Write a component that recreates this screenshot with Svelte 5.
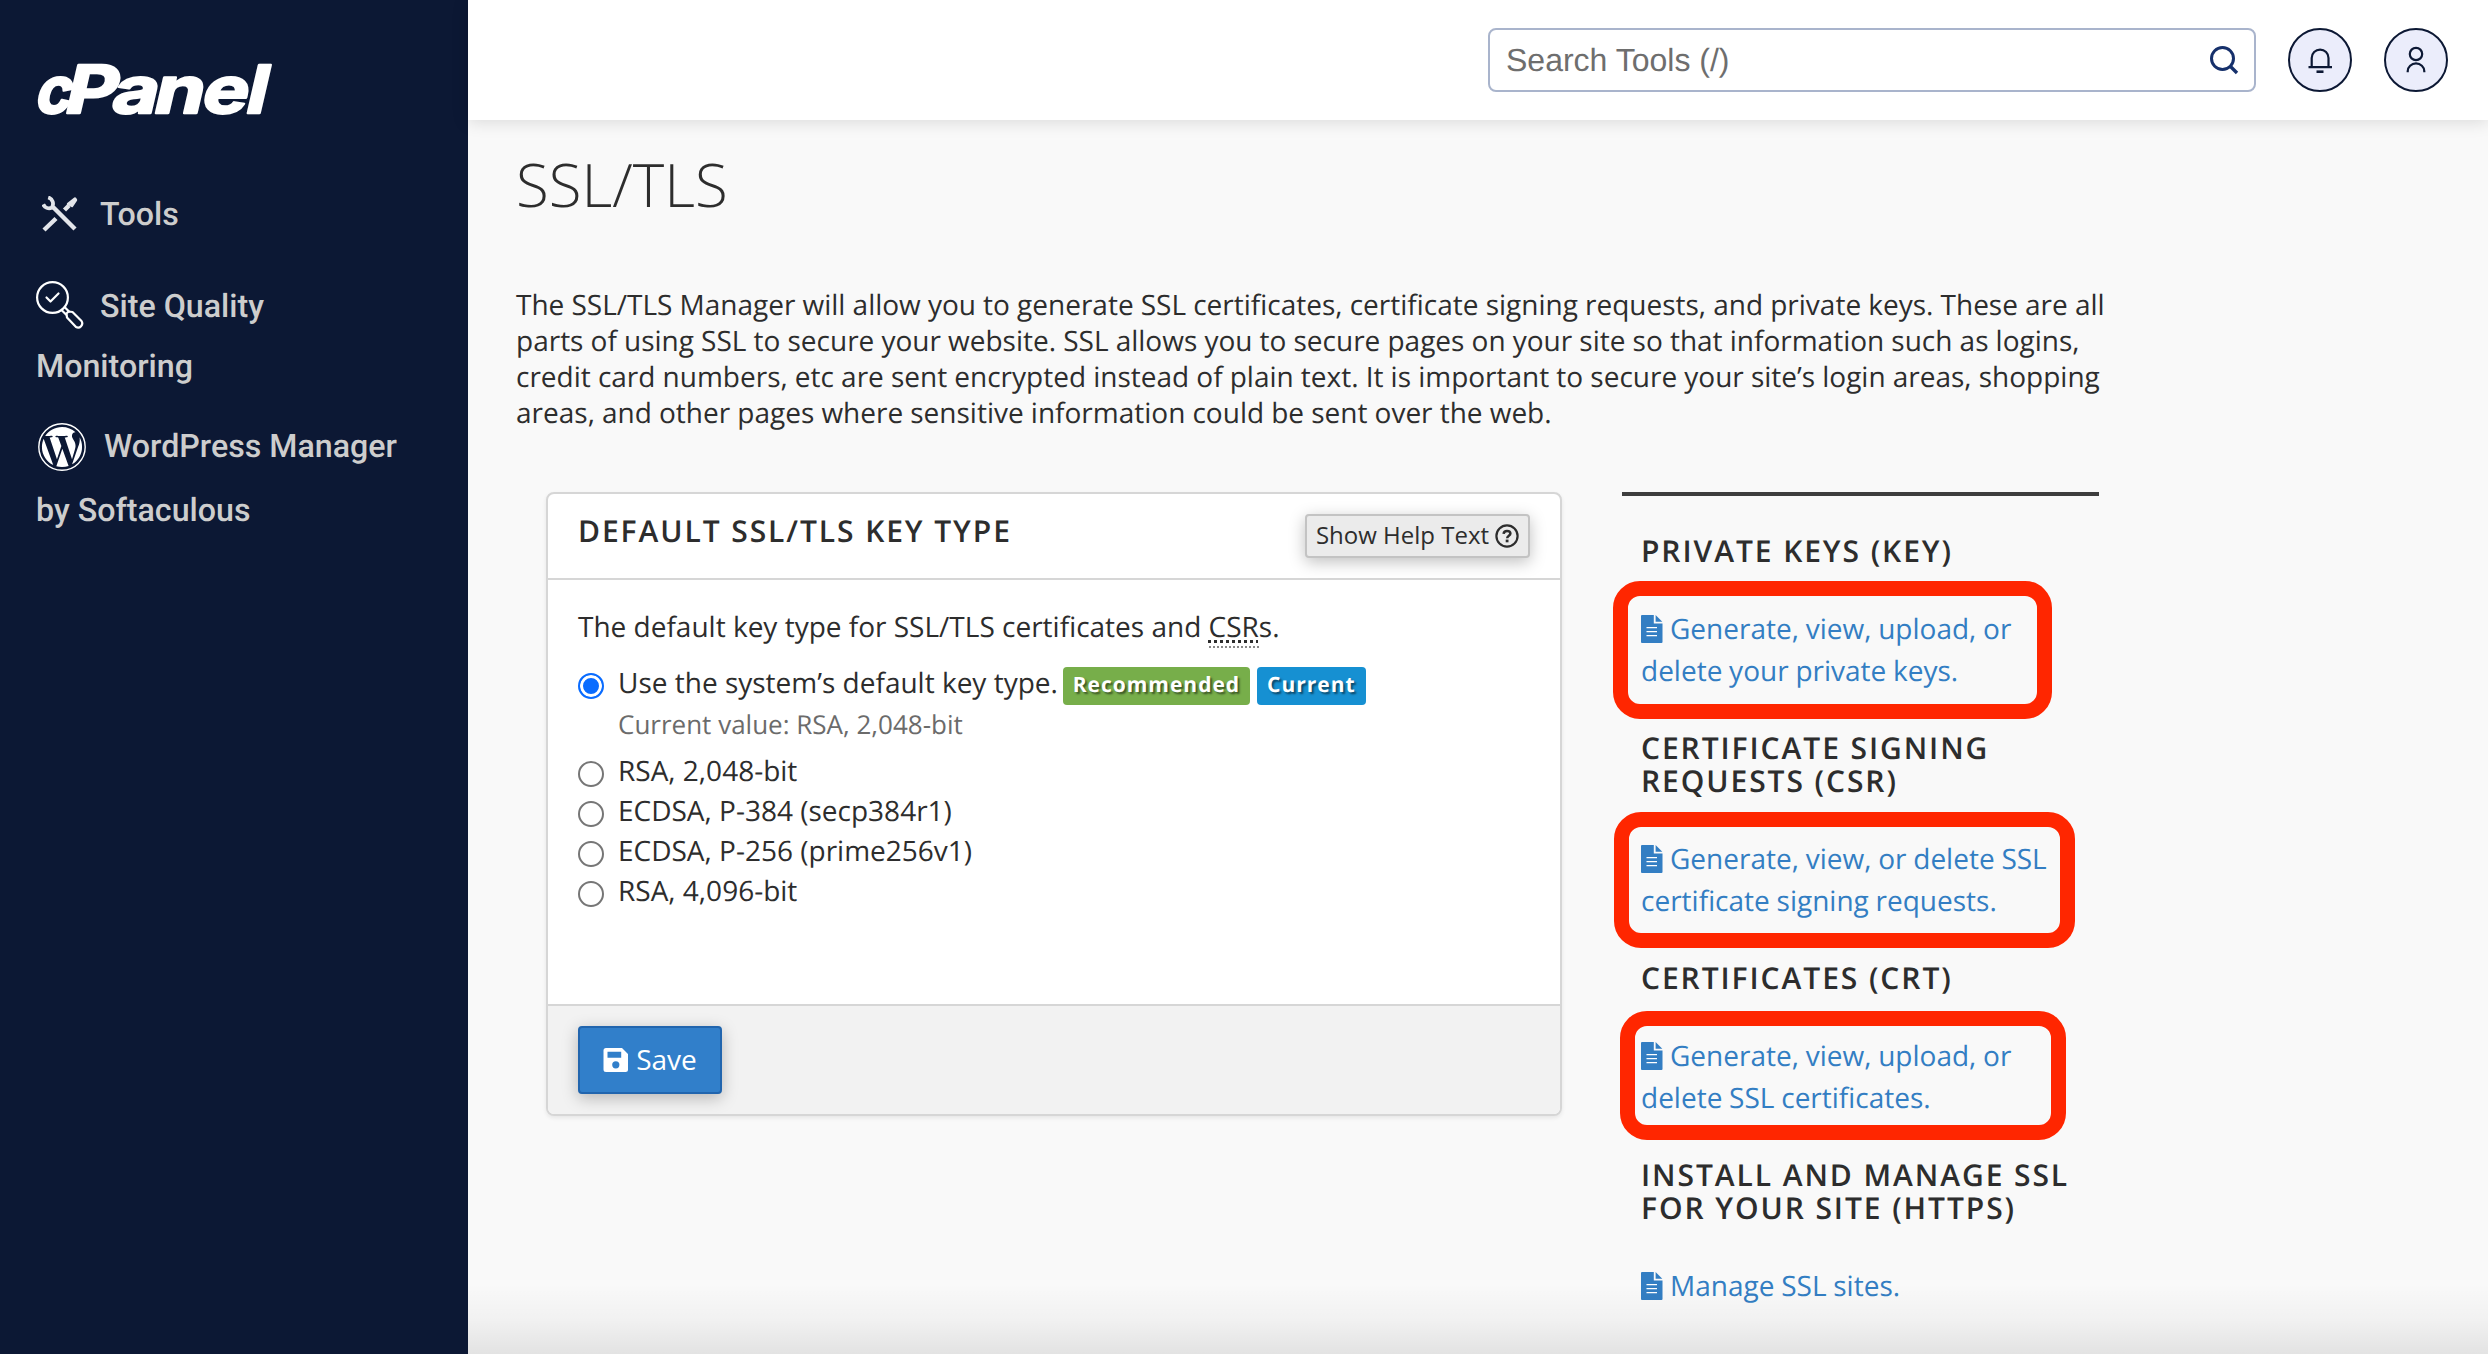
<script>
  const options = ['RSA, 2,048-bit', 'ECDSA, P-384 (secp384r1)', 'ECDSA, P-256 (prime256v1)', 'RSA, 4,096-bit'];
  const sections = [
    { title: ['PRIVATE KEYS (KEY)'], link: ['Generate, view, upload, or', 'delete your private keys.'], mark: 'mark-key' },
    { title: ['CERTIFICATE SIGNING', 'REQUESTS (CSR)'], link: ['Generate, view, or delete SSL', 'certificate signing requests.'], mark: 'mark-csr' },
    { title: ['CERTIFICATES (CRT)'], link: ['Generate, view, upload, or', 'delete SSL certificates.'], mark: 'mark-crt' },
    { title: ['INSTALL AND MANAGE SSL', 'FOR YOUR SITE (HTTPS)'], link: ['Manage SSL sites.'], mark: '' }
  ];
</script>

<div class="app">
  <aside class="sidebar">
    <svg class="logo" viewBox="0 0 240 54" role="img" aria-label="cPanel">
      <g transform="skewX(-13)" fill="#fff" stroke="#fff" stroke-width="2.4" stroke-linejoin="round" font-family="Inter, sans-serif" font-weight="700">
        <text x="9" y="51" font-size="65" textLength="36" lengthAdjust="spacingAndGlyphs">c</text>
        <text x="38" y="51" font-size="66" textLength="52" lengthAdjust="spacingAndGlyphs">P</text>
        <text x="85" y="51" font-size="65" textLength="46" lengthAdjust="spacingAndGlyphs">a</text>
        <text x="127" y="51" font-size="65" textLength="50" lengthAdjust="spacingAndGlyphs">n</text>
        <text x="175" y="51" font-size="65" textLength="46" lengthAdjust="spacingAndGlyphs">e</text>
        <text x="219" y="51" font-size="66" textLength="21" lengthAdjust="spacingAndGlyphs">l</text>
      </g>
    </svg>
    <nav>
      <a class="item tools" href="#tools">
        <svg class="ico-tools" viewBox="0 0 36 36" fill="none" stroke="#e3e5ea" stroke-width="4.4">
          <path d="M11 11 33 33" />
          <path d="M6.2 1.4a6.6 6.6 0 0 1 3.4 10.4A6.6 6.6 0 0 1 1.2 8.4" stroke-width="3.8" />
          <path d="M2 34 14 22.500M22.500 14 27 9.500" />
          <path d="M26 8 33 2.500 34 4 30 10Z" fill="#e3e5ea" stroke-width="2.4" stroke-linejoin="round" />
        </svg><span>Tools</span>
      </a>
      <a class="item quality" href="#quality">
        <span class="row"><svg class="ico-quality" viewBox="0 0 48 48" fill="none" stroke="#fff" stroke-width="2.200" stroke-linejoin="round" stroke-linecap="round">
          <circle cx="16.500" cy="16.500" r="15.400" />
          <path d="M10.500 16.500 14.500 20.500 22.500 12.500" />
          <path d="M26 29.500 30 33.500M29 26.500 33 30.500" />
          <path d="M31 36.500 30.500 32.500 32.500 30.500 36.500 31 45.500 40A4.200 4.200 0 0 1 40 46Z" />
        </svg><span>Site Quality</span></span>
        <span>Monitoring</span>
      </a>
      <a class="item wp" href="#wordpress">
        <span class="row"><svg class="ico-wp" viewBox="0 0 24 24">
          <circle cx="12" cy="12" r="11.600" fill="none" stroke="#fff" stroke-width=".7" />
          <path transform="translate(.84 .84) scale(.93)" fill="#fff" d="M21.469 6.825c.84 1.537 1.318 3.300 1.318 5.175 0 3.979-2.156 7.456-5.363 9.325l3.295-9.527c.615-1.540.820-2.771.820-3.864 0-.405-.026-.780-.070-1.110m-7.981.105c.647-.030 1.232-.105 1.232-.105.582-.075.514-.930-.067-.899 0 0-1.755.135-2.880.135-1.064 0-2.850-.150-2.850-.150-.585-.030-.661.855-.075.885 0 0 .540.061 1.125.090l1.680 4.605-2.370 7.080L5.354 6.900c.649-.030 1.234-.100 1.234-.100.585-.075.516-.930-.065-.896 0 0-1.746.138-2.874.138-.200 0-.438-.008-.690-.015C4.911 3.150 8.235 1.215 12 1.215c2.809 0 5.365 1.072 7.286 2.833-.046-.003-.091-.009-.141-.009-1.060 0-1.812.923-1.812 1.914 0 .890.513 1.643 1.060 2.531.411.720.890 1.643.890 2.977 0 .915-.354 1.994-.821 3.479l-1.075 3.585-3.900-11.610.001.014zM12 22.784c-1.059 0-2.081-.153-3.048-.437l3.237-9.406 3.315 9.087c.024.053.050.101.078.149-1.120.393-2.325.609-3.582.609M1.211 12c0-1.564.336-3.050.935-4.390L7.290 21.709C3.694 19.960 1.212 16.271 1.211 12" />
        </svg><span>WordPress Manager</span></span>
        <span>by Softaculous</span>
      </a>
    </nav>
  </aside>

  <div class="page">
    <header>
      <div class="search">
        <span>Search Tools (/)</span>
        <svg viewBox="0 0 30 30" fill="none" stroke="#16306b" stroke-width="3"><circle cx="13.500" cy="13.500" r="11" /><path d="M21 21 28 28" stroke-width="3.400" /></svg>
      </div>
      <button class="round" aria-label="Notifications">
        <svg viewBox="0 0 64 64" fill="none" stroke="#0c1834" stroke-width="2.200"><path d="M23.700 39V30a8.400 8.400 0 0 1 16.800 0V39M20.500 39.200H44" /><path d="M28.500 43.700h7" stroke-width="2.600" /></svg>
      </button>
      <button class="round" aria-label="Account">
        <svg viewBox="0 0 64 64" fill="none" stroke="#0c1834" stroke-width="2.200"><circle cx="32" cy="26" r="6.200" /><path d="M23.700 44.200v-1a8.300 7.800 0 0 1 16.600 0v1" /></svg>
      </button>
    </header>

    <main>
      <h1>SSL/TLS</h1>
      <p class="intro">The SSL/TLS Manager will allow you to generate SSL certificates, certificate signing requests, and private keys. These are all<br />parts of using SSL to secure your website. SSL allows you to secure pages on your site so that information such as logins,<br />credit card numbers, etc are sent encrypted instead of plain text. It is important to secure your site’s login areas, shopping<br />areas, and other pages where sensitive information could be sent over the web.</p>

      <div class="columns">
        <section class="card">
          <div class="card-head">
            <h2>DEFAULT SSL/TLS KEY TYPE</h2>
            <button class="help"><span>Show Help Text</span>
              <svg viewBox="0 0 24 24" fill="none" stroke="#2d2d2d"><circle cx="12" cy="12" r="10.600" stroke-width="2.200" /><path d="M8.600 9.800C8.800 7.700 10.300 6.900 12 6.900c2 0 3.400 1.100 3.400 2.700 0 2.200-3.200 2.200-3.200 4.600" stroke-width="2.500" /><path d="M12.100 15.600v2.700" stroke-width="2.800" /></svg>
            </button>
          </div>
          <div class="card-body">
            <p class="lead">The default key type for SSL/TLS certificates and <span class="abbr">CSR</span>s.</p>
            <label class="option main-option">
              <span class="radio on"></span><span class="label">Use the system’s default key type.</span>
              <span class="badge green">Recommended</span><span class="badge blue">Current</span>
            </label>
            <div class="current">Current value: RSA, 2,048-bit</div>
            {#each options as option}
              <label class="option"><span class="radio"></span><span class="label">{option}</span></label>
            {/each}
          </div>
          <div class="card-foot">
            <button class="save">
              <svg viewBox="0 0 26 26"><path fill="#fff" fill-rule="evenodd" d="M3 1H19L25 7V22.500A2.500 2.500 0 0 1 22.500 25H3A2.500 2.500 0 0 1 .5 22.500V3.500A2.500 2.500 0 0 1 3 1ZM4.500 4.800V10.800H18.200V4.800ZM12.800 14.200A3.600 3.600 0 1 0 12.800 21.400 3.600 3.600 0 1 0 12.800 14.200Z" /></svg>
              <span>Save</span>
            </button>
          </div>
        </section>

        <aside class="links">
          {#each sections as section}
            <section class="link-group">
              <h3>{#each section.title as line}<span>{line}</span>{/each}</h3>
              <a href="#ssl">
                <span class="first"><svg viewBox="0 0 22 28"><path fill="#337ec3" d="M1 0H12.800V8.600H21.500V27a1 1 0 0 1-1 1H1a1 1 0 0 1-1-1V1a1 1 0 0 1 1-1Z" /><path fill="#337ec3" d="M14.600 0 21.300 6.800H14.600Z" /><path stroke="#fff" stroke-width="1.300" d="M5.500 12.700H16M5.500 16.700H16M5.500 20.700H16" /></svg>{section.link[0]}</span>
                {#if section.link[1]}<span>{section.link[1]}</span>{/if}
                {#if section.mark}<i class="mark {section.mark}"></i>{/if}
              </a>
            </section>
          {/each}
        </aside>
      </div>
    </main>
    <div class="shade"></div>
  </div>
</div>

<style>
  :global(body) { margin: 0; overflow: hidden; }
  * { box-sizing: border-box; }
  .app { display: flex; width: 2488px; height: 1354px; overflow: hidden; font-family: "Open Sans", sans-serif; color: #2d2d2d; background: #f9f9f9; text-rendering: geometricPrecision; }
  a { text-decoration: none; }
  button { font: inherit; color: inherit; margin: 0; padding: 0; }
  svg { display: block; flex: none; }

  .sidebar { width: 468px; flex: none; background: #0c1834; padding: 62px 0 0 36px; }
  .logo { width: 240px; height: 54px; overflow: visible; }
  .item { display: flex; flex-direction: column; font-family: Roboto, sans-serif; font-size: 32.2px; font-weight: 500; color: #cdcdcd; white-space: nowrap; }
  .row { display: flex; align-items: center; }
  .tools { flex-direction: row; align-items: center; height: 60px; margin-top: 68px; padding-left: 6px; gap: 22px; }
  .ico-tools { width: 36px; height: 36px; }
  .quality { line-height: 60px; margin-top: 32px; }
  .quality .row { height: 60px; gap: 16px; }
  .ico-quality { width: 48px; height: 48px; margin-top: -2px; }
  .wp { line-height: 64px; margin-top: 18px; }
  .wp .row { height: 64px; gap: 18px; }
  .ico-wp { width: 48px; height: 48px; margin: 2px 0 0 2px; }

  .page { flex: 1; display: flex; flex-direction: column; position: relative; min-width: 0; }
  header { height: 120px; flex: none; background: #fff; display: flex; align-items: center; justify-content: flex-end; padding-right: 40px; gap: 32px; box-shadow: 0 2px 16px rgba(0, 0, 0, 0.13); }
  .search { width: 768px; height: 64px; border: 2px solid #a9b4cc; border-radius: 8px; display: flex; align-items: center; justify-content: space-between; padding: 0 15px 0 16px; font-family: "Liberation Sans", sans-serif; font-size: 32px; color: #6e6e6e; }
  .search svg { width: 30px; height: 30px; }
  .round { width: 64px; height: 64px; border: 2px solid #0c1834; border-radius: 50%; background: #ebedfb; display: flex; align-items: center; justify-content: center; }
  .round svg { width: 64px; height: 64px; }

  main { padding: 22px 0 0 48px; }
  h1 { margin: 0; font-weight: 300; font-size: 60px; line-height: 84px; height: 84px; }
  .intro { margin: 61px 0 0; font-size: 28px; line-height: 36px; word-spacing: -0.14px; white-space: nowrap; }
  .columns { display: flex; align-items: flex-start; margin: 61px 0 0 30px; gap: 60px; }

  .card { width: 1016px; height: 624px; border: 2px solid #d6d6d6; border-radius: 8px; background: #fff; box-shadow: 0 2px 4px rgba(0, 0, 0, 0.08); display: flex; flex-direction: column; overflow: hidden; }
  .card-head { height: 86px; flex: none; border-bottom: 2px solid #d6d6d6; display: flex; justify-content: space-between; align-items: flex-start; padding: 20px 30px 0 30px; }
  h2, h3 { margin: 0; font-weight: 600; font-size: 30px; letter-spacing: 1.92px; line-height: 33px; white-space: nowrap; }
  .help { width: 225px; height: 44px; border: 2px solid #c3c3c3; border-radius: 4px; background: #ebebeb; box-shadow: 0 4px 16px rgba(0, 0, 0, 0.25); display: flex; align-items: center; justify-content: center; gap: 6px; font-size: 24px; line-height: 36px; white-space: nowrap; }
  .help span { margin-top: -2px; }
  .help svg { width: 24px; height: 24px; }
  .card-body { flex: 1; padding: 27px 0 0 30px; font-size: 28px; line-height: 40px; white-space: nowrap; }
  .lead { margin: 0 0 16px; }
  .abbr { text-decoration: underline dotted; text-decoration-thickness: 3px; text-underline-offset: 3px; border-bottom: 2px dotted #888; }
  .option { display: flex; align-items: center; height: 40px; }
  .radio { width: 26px; height: 26px; border: 2px solid #767676; border-radius: 50%; margin: 5px 14px 0 0; flex: none; }
  .radio.on { border-color: #0a6cff; background: #0a6cff; box-shadow: inset 0 0 0 3px #fff; }
  .badge { height: 38px; border-radius: 4px; color: #fff; font-size: 21px; font-weight: 700; letter-spacing: 1px; line-height: 37px; text-align: center; text-shadow: 2px 2px 2px rgba(0, 0, 0, 0.5); margin-top: 6px; }
  .green { width: 187px; background: #77ae4a; margin-left: 5px; }
  .blue { width: 109px; background: #1690d2; margin-left: 7px; }
  .current { font-size: 26px; color: #6b6b6b; padding-left: 40px; height: 48px; line-height: 42px; }
  .card-foot { height: 110px; flex: none; border-top: 2px solid #d6d6d6; background: #f2f2f2; padding: 20px 0 0 30px; }
  .save { width: 144px; height: 68px; border: 2px solid #2165ae; border-radius: 4px; background: #317fca; color: #fff; box-shadow: 0 4px 16px rgba(0, 0, 0, 0.25); display: flex; align-items: center; justify-content: center; gap: 7px; font-size: 28px; }
  .save svg { width: 26px; height: 26px; }
  .save span { margin-top: -2px; }

  .links { width: 477px; border-top: 4px solid #3e3e3e; padding: 38px 0 0 19px; }
  .link-group { margin-bottom: 39px; }
  h3 span, .link-group a span { display: block; }
  .link-group a { display: block; position: relative; margin-top: 41px; font-size: 28px; line-height: 42px; word-spacing: -0.5px; color: #337ec3; white-space: nowrap; }
  .link-group a .first { display: flex; align-items: center; gap: 7px; }
  .first svg { width: 22px; height: 28px; margin-top: -1px; }
  .mark { position: absolute; border: 15px solid #ff2600; border-radius: 27px; }
  .mark-key { left: -28px; top: -27px; width: 439px; height: 138px; }
  .mark-csr { left: -27px; top: -26px; width: 461px; height: 136px; }
  .mark-crt { left: -21px; top: -24px; width: 446px; height: 129px; }
  .shade { position: absolute; left: 0; right: 0; bottom: 0; height: 70px; background: linear-gradient(rgba(0, 0, 0, 0), rgba(0, 0, 0, 0.03) 50%, rgba(0, 0, 0, 0.09)); pointer-events: none; }
</style>
